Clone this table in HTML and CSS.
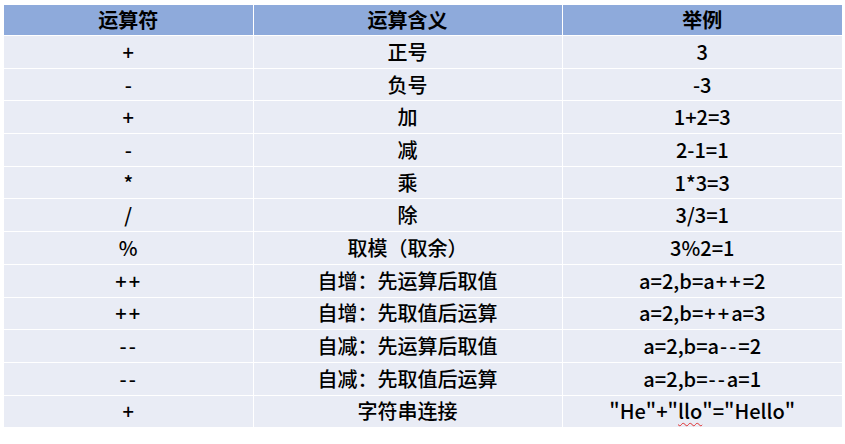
FILE: index.html
```html
<!DOCTYPE html>
<html lang="zh-CN">
<head>
<meta charset="utf-8">
<title>运算符</title>
<link rel="stylesheet" href="styles.css">
</head>
<body>
<table class="ops">
  <colgroup>
    <col class="c1"><col class="c2"><col class="c3">
  </colgroup>
  <thead>
    <tr><th>运算符</th><th>运算含义</th><th>举例</th></tr>
  </thead>
  <tbody>
    <tr><td>+</td><td>正号</td><td>3</td></tr>
    <tr><td>-</td><td>负号</td><td>-3</td></tr>
    <tr><td>+</td><td>加</td><td>1+2=3</td></tr>
    <tr><td>-</td><td>减</td><td>2-1=1</td></tr>
    <tr><td>*</td><td>乘</td><td>1*3=3</td></tr>
    <tr><td>/</td><td>除</td><td>3/3=1</td></tr>
    <tr><td>%</td><td>取模（取余）</td><td>3%2=1</td></tr>
    <tr><td><span class="sp">++</span></td><td>自增：先运算后取值</td><td>a=2,b=a<span class="sp">++</span>=2</td></tr>
    <tr><td><span class="sp">++</span></td><td>自增：先取值后运算</td><td>a=2,b=<span class="sp">++</span>a=3</td></tr>
    <tr><td><span class="sp">--</span></td><td>自减：先运算后取值</td><td>a=2,b=a<span class="sp">--</span>=2</td></tr>
    <tr><td><span class="sp">--</span></td><td>自减：先取值后运算</td><td>a=2,b=<span class="sp">--</span>a=1</td></tr>
    <tr><td>+</td><td>字符串连接</td><td>"He"+"<span class="typo">llo</span>"="Hello"</td></tr>
  </tbody>
</table>
</body>
</html>
```
FILE: styles.css
```css
html, body {
  margin: 0;
  padding: 0;
  background: #ffffff;
}
body {
  padding: 5px 0 0 4px;
  font-family: "Noto Sans CJK SC", "Noto Sans", sans-serif;
  color: #000000;
}
.ops {
  border-collapse: collapse;
  width: 838px;
  table-layout: fixed;
}
.c1 { width: 249px; }
.c2 { width: 309px; }
.c3 { width: 280px; }
.ops th, .ops td {
  border: 1px solid #ffffff;
  padding: 0;
  text-align: center;
  vertical-align: middle;
  font-size: 20px;
  line-height: 20px;
}
.ops th {
  background: #8eaadb;
  font-weight: bold;
  height: 30px;
  border-top: none;
}
.ops td {
  background: #e9ecf5;
  height: 31.7px;
  font-weight: 500;
}
.ops tr > :first-child { border-left: none; }
.ops tr > :last-child { border-right: none; }
.ops tbody tr:last-child td { border-bottom: none; }
.sp {
  letter-spacing: 2px;
  margin-left: 1px;
}
.typo {
  text-decoration: underline wavy #e03030;
  text-decoration-thickness: 1px;
  text-underline-offset: 3px;
}
```
